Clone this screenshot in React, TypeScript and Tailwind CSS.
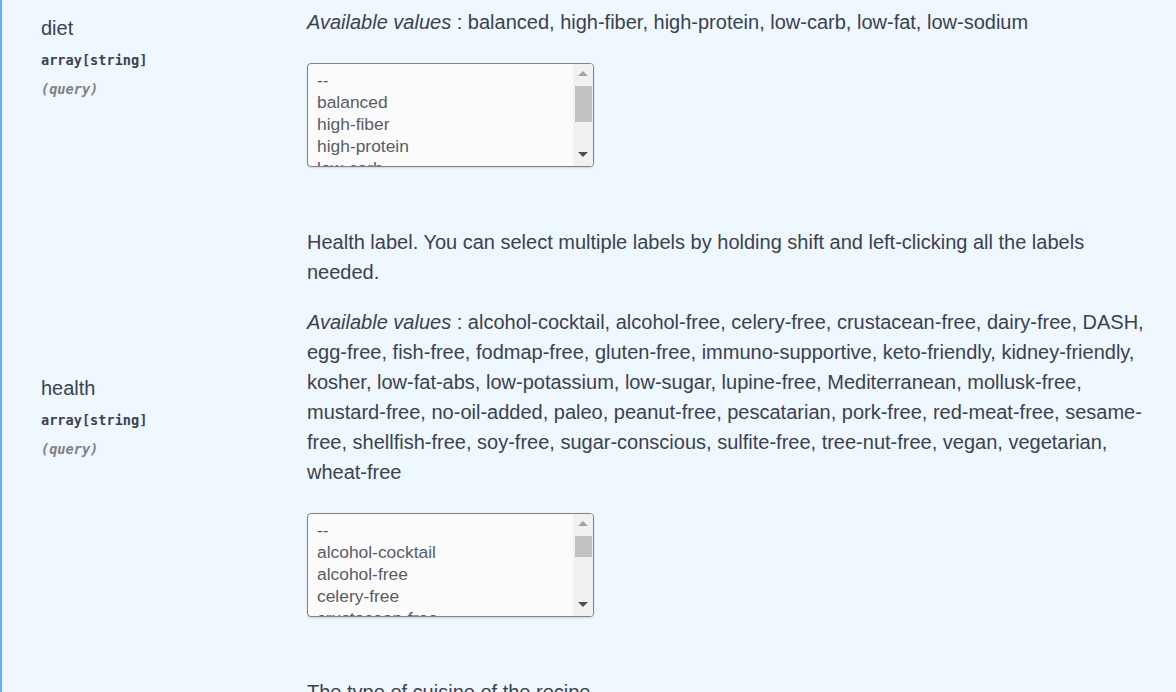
import React from "react";

type Param = {
  name: string;
  desc: string;
  values: string[];
  thumbTop: number;
  thumbHeight: number;
};

const params: Param[] = [
  {
    name: "diet",
    desc: "Diet label",
    values: ["balanced", "high-fiber", "high-protein", "low-carb", "low-fat", "low-sodium"],
    thumbTop: 22,
    thumbHeight: 36,
  },
  {
    name: "health",
    desc: "Health label. You can select multiple labels by holding shift and left-clicking all the labels needed.",
    values: [
      "alcohol-cocktail",
      "alcohol-free",
      "celery-free",
      "crustacean-free",
      "dairy-free",
      "DASH",
      "egg-free",
      "fish-free",
      "fodmap-free",
      "gluten-free",
      "immuno-supportive",
      "keto-friendly",
      "kidney-friendly",
      "kosher",
      "low-fat-abs",
      "low-potassium",
      "low-sugar",
      "lupine-free",
      "Mediterranean",
      "mollusk-free",
      "mustard-free",
      "no-oil-added",
      "paleo",
      "peanut-free",
      "pescatarian",
      "pork-free",
      "red-meat-free",
      "sesame-free",
      "shellfish-free",
      "soy-free",
      "sugar-conscious",
      "sulfite-free",
      "tree-nut-free",
      "vegan",
      "vegetarian",
      "wheat-free",
    ],
    thumbTop: 22,
    thumbHeight: 21,
  },
];

function MultiSelect({ options, thumbTop, thumbHeight }: { options: string[]; thumbTop: number; thumbHeight: number }) {
  return (
    <div className="relative w-[287px] h-[104px] rounded-[4px] border border-[#7d8492] bg-[#fbfbfb] shadow-[0_1px_2px_rgba(0,0,0,0.15)] overflow-hidden">
      <div className="pl-[9px] pt-[5px] pr-[22px] text-[17.4px] leading-[22px] text-[#575b66]">
        {["--", ...options].map((o) => (
          <div key={o} className="whitespace-nowrap">
            {o}
          </div>
        ))}
      </div>
      {/* fake scrollbar */}
      <div className="absolute right-0 top-0 bottom-0 w-[20px] bg-[#f1f1f1]">
        <div className="absolute left-[5px] top-[7px] w-0 h-0 border-l-[5px] border-r-[5px] border-b-[5px] border-l-transparent border-r-transparent border-b-[#a3a3a3]" />
        <div
          className="absolute left-[2px] w-[17px] bg-[#c1c1c1]"
          style={{ top: thumbTop, height: thumbHeight }}
        />
        <div className="absolute left-[5px] bottom-[9px] w-0 h-0 border-l-[5px] border-r-[5px] border-t-[5px] border-l-transparent border-r-transparent border-t-[#505050]" />
      </div>
    </div>
  );
}

export default function App() {
  return (
    <div className="w-[1176px] h-[692px] overflow-hidden bg-[#eff7ff] border-l-2 border-[#61affe] text-[#3b4151] font-['Liberation_Sans',Arial,sans-serif]">
      <div className="mt-[-73px]">
        {params.map((p) => (
          <div key={p.name} className="flex py-[30px]">
            {/* Name column */}
            <div className="w-[305px] shrink-0 pl-[39px] flex flex-col justify-center">
              <div className="pb-[9px]">
                <div className="text-[20px] leading-[26px]">{p.name}</div>
                <div className="mt-[8px] font-['DejaVu_Sans_Mono',monospace] text-[13.6px] font-bold leading-[22px] text-[#3b4151]">
                  array[string]
                </div>
                <div className="mt-[7px] font-['DejaVu_Sans_Mono',monospace] text-[13.6px] font-semibold italic leading-[22px] text-[#808080]">
                  (query)
                </div>
              </div>
            </div>
            {/* Description column */}
            <div className="w-[845px] text-[20px] leading-[30px]">
              <p>{p.desc}</p>
              <p className="mt-[20px]">
                <i>Available values</i> : {p.values.join(", ")}
              </p>
              <div className="mt-[26px]">
                <MultiSelect options={p.values} thumbTop={p.thumbTop} thumbHeight={p.thumbHeight} />
              </div>
            </div>
          </div>
        ))}
        <div className="flex py-[30px]">
          <div className="w-[305px] shrink-0" />
          <div className="w-[845px] text-[20px] leading-[30px]">
            <p>The type of cuisine of the recipe</p>
          </div>
        </div>
      </div>
    </div>
  );
}
